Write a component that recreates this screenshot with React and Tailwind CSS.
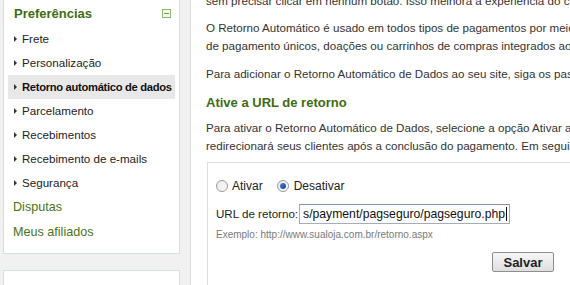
import React from 'react';

const items = [
  'Frete',
  'Personalização',
  'Retorno automático de dados',
  'Parcelamento',
  'Recebimentos',
  'Recebimento de e-mails',
  'Segurança',
];

function Radio({ checked }) {
  return (
    <span className="w-[12px] h-[12px] rounded-full border border-[#9a9a9a] bg-gradient-to-br from-[#e8e8e8] to-white flex items-center justify-center">
      {checked && <span className="w-[6px] h-[6px] rounded-full bg-gradient-to-br from-[#4a8be0] to-[#143f86]" />}
    </span>
  );
}

export default function App() {
  return (
    <div className="w-[570px] h-[285px] overflow-hidden flex bg-[#f1f1f1] font-['Liberation_Sans',Arial,sans-serif]">
      <aside className="w-[190px] shrink-0 pl-[3px]">
        <div className="w-[177px] h-[254px] bg-white border-x border-b border-[#cfe3de]">
          <div className="h-[27px] flex items-center justify-between pl-[10px] pr-[8px]">
            <span className="text-[13px] font-bold text-[#3e6d12]">Preferências</span>
            <span className="w-[9px] h-[9px] border border-[#8fb472] bg-[#f4f9ee] flex items-center justify-center">
              <span className="w-[5px] h-px bg-[#6e9a4a]" />
            </span>
          </div>
          {items.map((label, i) => (
            <div
              key={label}
              className={`h-[24px] mx-[4px] flex items-center gap-[5px] pl-[6px] whitespace-nowrap ${
                i === 2 ? 'bg-[#e8e8e8] font-bold text-[11.2px] tracking-[-0.3px] text-[#111]' : 'text-[11.6px] text-[#222]'
              }`}
            >
              <span className="w-0 h-0 border-y-[3px] border-y-transparent border-l-[3px] border-l-[#333]" />
              {label}
            </div>
          ))}
          <div className="h-[25px] flex items-center pl-[9px] text-[12.6px] text-[#4a7418]">Disputas</div>
          <div className="h-[25px] flex items-center pl-[9px] text-[12.6px] text-[#4a7418]">Meus afiliados</div>
        </div>
        <div className="w-[177px] h-[40px] mt-[16px] bg-white border border-[#cfe3de]" />
      </aside>

      <main className="flex-1 bg-white border-l border-[#dcdcdc] pl-[15px] text-[11.6px] leading-[18px] text-[#333] whitespace-nowrap">
        <div className="-mt-[8px]">
          <p>sem precisar clicar em nenhum botão. Isso melhora a experiência do comprador na sua loja.</p>
          <p className="mt-[9px]">O Retorno Automático é usado em todos tipos de pagamentos por meio do PagSeguro, seja</p>
          <p>de pagamento únicos, doações ou carrinhos de compras integrados ao PagSeguro.</p>
          <p className="mt-[10px]">Para adicionar o Retorno Automático de Dados ao seu site, siga os passos abaixo:</p>
          <h2 className="mt-[11px] text-[13px] font-bold text-[#3e6d12]">Ative a URL de retorno</h2>
          <p className="mt-[7px]">Para ativar o Retorno Automático de Dados, selecione a opção Ativar abaixo e informe a URL</p>
          <p>redirecionará seus clientes após a conclusão do pagamento. Em seguida, clique em Salvar.</p>

          <div className="mt-[7px] ml-[1px] w-[400px] h-[140px] border border-[#dedede] pl-[8px] pt-[14px]">
            <div className="h-[18px] flex items-center text-[12px] text-[#222]">
              <Radio />
              <span className="ml-[4px]">Ativar</span>
              <span className="ml-[14px]"><Radio checked /></span>
              <span className="ml-[5px]">Desativar</span>
            </div>
            <div className="mt-[9px] h-[20px] flex items-center text-[11.6px] text-[#222]">
              <span>URL de retorno:</span>
              <span className="ml-[1px] w-[211px] h-[20px] border border-[#a4aebb] border-t-[#7f93b2] flex items-center pl-[3px] text-[12.2px] text-[#111] overflow-hidden">
                s/payment/pagseguro/pagseguro.php
                <span className="w-px h-[14px] bg-[#111] ml-px" />
              </span>
            </div>
            <p className="mt-[5px] text-[10px] leading-[12px] text-[#7a7a7a]">Exemplo: http://www.sualoja.com.br/retorno.aspx</p>
            <div className="mt-[11px] flex pl-[276px]">
              <button className="w-[62px] h-[20px] border border-[#8e8e8e] rounded-[2px] bg-gradient-to-b from-[#f7f7f7] to-[#dedede] text-[13px] font-bold text-[#222] leading-none">
                Salvar
              </button>
            </div>
          </div>
        </div>
      </main>
    </div>
  );
}
